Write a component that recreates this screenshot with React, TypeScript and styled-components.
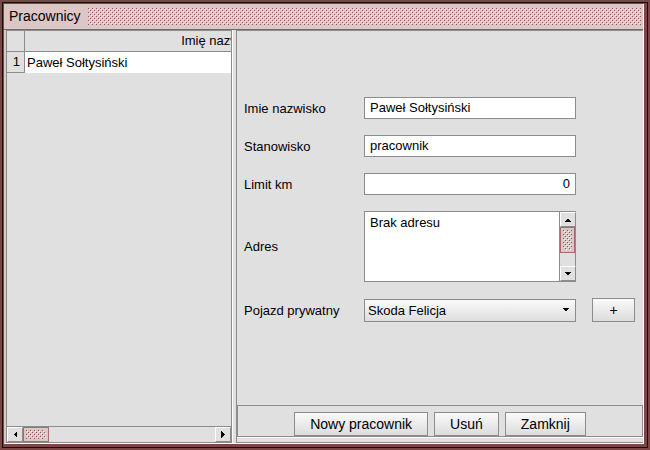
import React from "react";
import styled, { createGlobalStyle } from "styled-components";

const palette = {
  maroon: "#7d4646",
  frameLine: "#1e0c0c",
  pink: "#dcc6c6",
  dot: "#8a5454",
  panel: "#e0e0e0",
  line: "#8c8c8c",
  thumbLine: "#a86a6a",
};

const GlobalStyle = createGlobalStyle`
  html, body { margin: 0; padding: 0; }
  body {
    font-family: "Liberation Sans", Arial, sans-serif;
    font-size: 13px;
    color: #000;
  }
  * { box-sizing: border-box; }
`;

const DotSvg = styled.svg`
  display: block;
  width: 100%;
  height: 100%;
`;

// the pink checker texture of the title grip and scroll thumbs
const Dots = ({ id }: { id: string }) => (
  <DotSvg>
    <defs>
      <pattern id={id} width="4" height="4" patternUnits="userSpaceOnUse">
        <rect x="0" y="0" width="1" height="1" fill={palette.dot} />
        <rect x="1" y="1" width="1" height="1" fill="#fff" />
        <rect x="2" y="2" width="1" height="1" fill={palette.dot} />
        <rect x="3" y="3" width="1" height="1" fill="#fff" />
      </pattern>
    </defs>
    <rect width="100%" height="100%" fill={`url(#${id})`} shapeRendering="crispEdges" />
  </DotSvg>
);

type Dir = "left" | "right" | "up" | "down";
const arrowPoints: Record<Dir, string> = {
  left: "6,4 6,11 2.5,7.5",
  right: "2,4 2,11 5.5,7.5",
  up: "0.5,6 7.5,6 4,2.5",
  down: "0.5,2 7.5,2 4,5.5",
};

const Arrow = ({ dir }: { dir: Dir }) => {
  const horiz = dir === "left" || dir === "right";
  return (
    <svg width={horiz ? 8 : 8} height={horiz ? 15 : 8} viewBox={horiz ? "0 0 8 15" : "0 0 8 8"}>
      <polygon points={arrowPoints[dir]} fill="#000" shapeRendering="crispEdges" />
    </svg>
  );
};

const Frame = styled.div`
  width: 650px;
  height: 450px;
  padding: 2px;
  background: ${palette.maroon};
`;

const FrameLine = styled.div`
  height: 100%;
  display: flex;
  border: 1px solid ${palette.frameLine};
  padding: 1px 3px 3px 1px;
  background: ${palette.maroon};
`;

const Window = styled.div`
  flex: 1;
  display: flex;
  flex-direction: column;
  background: ${palette.panel};
  border-left: 2px solid ${palette.pink};
  border-right: 1px solid #fff;
  border-bottom: 1px solid #fff;
`;

const TitleBar = styled.div`
  height: 26px;
  flex: none;
  display: flex;
  align-items: stretch;
  background: ${palette.pink};
  border-bottom: 1px solid #6e6e6e;
  margin-left: -2px;
`;

const Title = styled.div`
  padding: 0 7px 0 5px;
  font-size: 14px;
  line-height: 25px;
`;

const Grip = styled.div`
  flex: 1;
  margin: 4px 2px 4px 0;
`;

const Body = styled.div`
  flex: 1;
  min-height: 0;
  display: flex;
`;

const TablePane = styled.div`
  width: 226px;
  flex: none;
  display: flex;
  flex-direction: column;
  border: 1px solid ${palette.line};
`;

const Viewport = styled.div`
  flex: 1;
  overflow: hidden;
  background: ${palette.panel};
`;

const TableRow = styled.div<{ $header?: boolean }>`
  display: flex;
  width: 413px;
  height: 21px;
  background: ${(p) => (p.$header ? palette.panel : "#fff")};
`;

const RowHead = styled.div`
  width: 18px;
  flex: none;
  background: ${palette.panel};
  border-right: 1px solid ${palette.line};
  border-bottom: 1px solid ${palette.line};
  text-align: right;
  padding-right: 4px;
  line-height: 20px;
`;

const HeadCell = styled.div`
  flex: 1;
  text-align: center;
  line-height: 20px;
  border-bottom: 1px solid ${palette.line};
  padding-right: 1px;
`;

const Cell = styled.div`
  flex: 1;
  padding-left: 2px;
  line-height: 21px;
  white-space: nowrap;
`;

const HScroll = styled.div`
  height: 16px;
  flex: none;
  display: flex;
  border-top: 1px solid ${palette.line};
  background: ${palette.panel};
`;

const VScroll = styled.div`
  width: 16px;
  flex: none;
  display: flex;
  flex-direction: column;
  border-left: 1px solid ${palette.line};
  background: ${palette.panel};
`;

const ScrollBtn = styled.div`
  width: 16px;
  height: 15px;
  flex: none;
  display: flex;
  align-items: center;
  justify-content: center;
  border: 1px solid;
  border-color: #fff ${palette.line} ${palette.line} #fff;
  background: ${palette.panel};
`;

const Thumb = styled.div<{ $vertical?: boolean }>`
  flex: none;
  width: ${(p) => (p.$vertical ? "15px" : "26px")};
  height: ${(p) => (p.$vertical ? "26px" : "15px")};
  border: 1px solid ${palette.thumbLine};
  background: ${palette.pink};
  padding: 2px;
`;

const Track = styled.div`
  flex: 1;
`;

const Divider = styled.div`
  width: 4px;
  flex: none;
  border-left: 1px solid #fff;
`;

const EditPane = styled.div`
  flex: 1;
  display: flex;
  flex-direction: column;
  border-left: 1px solid ${palette.line};
  border-top: 1px solid ${palette.line};
  border-bottom: 1px solid ${palette.line};
`;

const Form = styled.div`
  flex: 1;
  padding: 66px 0 0 7px;
  display: grid;
  grid-template-columns: 104px 212px 43px;
  column-gap: 16px;
  row-gap: 16px;
  align-content: start;
  align-items: center;
`;

const Label = styled.div`
  white-space: nowrap;
`;

const TextField = styled.div<{ $right?: boolean }>`
  height: 22px;
  background: #fff;
  border: 1px solid ${palette.line};
  padding: 0 ${(p) => (p.$right ? "5px" : "0")} 0 ${(p) => (p.$right ? "0" : "5px")};
  text-align: ${(p) => (p.$right ? "right" : "left")};
  line-height: 20px;
  white-space: nowrap;
`;

const AreaBox = styled.div`
  height: 71px;
  display: flex;
  background: #fff;
  border: 1px solid ${palette.line};
`;

const AreaText = styled.div`
  flex: 1;
  padding: 3px 5px;
`;

const Combo = styled.div`
  height: 23px;
  display: flex;
  align-items: center;
  justify-content: space-between;
  padding: 0 5px 0 3px;
  border: 1px solid ${palette.line};
  background: linear-gradient(#fafafa, #dedede);
`;

const Button = styled.div<{ $width?: number }>`
  height: 24px;
  ${(p) => (p.$width ? `width: ${p.$width}px;` : "padding: 0 15px;")}
  display: flex;
  align-items: center;
  justify-content: center;
  border: 1px solid ${palette.line};
  background: linear-gradient(#fafafa, #dcdcdc);
  font-size: 14px;
  white-space: nowrap;
`;

const ButtonBar = styled.div`
  height: 32px;
  flex: none;
  margin-bottom: 5px;
  display: flex;
  justify-content: center;
  align-items: flex-start;
  gap: 6px;
  padding-top: 6px;
  border: 1px solid ${palette.line};
  box-shadow: 0 1px 0 #fff;
`;

const fields = [
  { label: "Imie nazwisko", value: "Paweł Sołtysiński" },
  { label: "Stanowisko", value: "pracownik" },
  { label: "Limit km", value: "0", right: true },
];

export default function App() {
  return (
    <>
      <GlobalStyle />
      <Frame>
        <FrameLine>
          <Window>
            <TitleBar>
              <Title>Pracownicy</Title>
              <Grip>
                <Dots id="grip" />
              </Grip>
            </TitleBar>
            <Body>
              <TablePane>
                <Viewport>
                  <TableRow $header>
                    <RowHead />
                    <HeadCell>Imię nazwisko</HeadCell>
                  </TableRow>
                  <TableRow>
                    <RowHead>1</RowHead>
                    <Cell>Paweł Sołtysiński</Cell>
                  </TableRow>
                </Viewport>
                <HScroll>
                  <ScrollBtn>
                    <Arrow dir="left" />
                  </ScrollBtn>
                  <Thumb>
                    <Dots id="hthumb" />
                  </Thumb>
                  <Track />
                  <ScrollBtn>
                    <Arrow dir="right" />
                  </ScrollBtn>
                </HScroll>
              </TablePane>
              <Divider />
              <EditPane>
                <Form>
                  {fields.map((f) => (
                    <React.Fragment key={f.label}>
                      <Label>{f.label}</Label>
                      <TextField $right={f.right}>{f.value}</TextField>
                      <span />
                    </React.Fragment>
                  ))}
                  <Label>Adres</Label>
                  <AreaBox>
                    <AreaText>Brak adresu</AreaText>
                    <VScroll>
                      <ScrollBtn>
                        <Arrow dir="up" />
                      </ScrollBtn>
                      <Thumb $vertical>
                        <Dots id="vthumb" />
                      </Thumb>
                      <Track />
                      <ScrollBtn>
                        <Arrow dir="down" />
                      </ScrollBtn>
                    </VScroll>
                  </AreaBox>
                  <span />
                  <Label>Pojazd prywatny</Label>
                  <Combo>
                    <span>Skoda Felicja</span>
                    <Arrow dir="down" />
                  </Combo>
                  <Button $width={43}>+</Button>
                </Form>
                <ButtonBar>
                  <Button>Nowy pracownik</Button>
                  <Button>Usuń</Button>
                  <Button>Zamknij</Button>
                </ButtonBar>
              </EditPane>
            </Body>
          </Window>
        </FrameLine>
      </Frame>
    </>
  );
}
